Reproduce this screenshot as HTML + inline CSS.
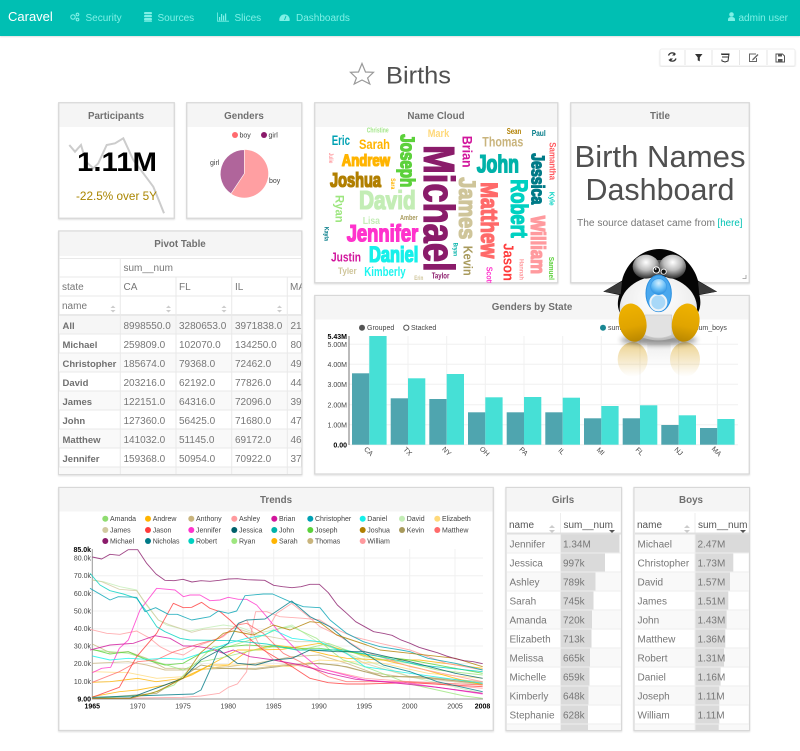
<!DOCTYPE html>
<html><head><meta charset="utf-8"><title>Births</title>
<style>
html,body{margin:0;padding:0;background:#fff;width:800px;height:751px;overflow:hidden}
svg{display:block;font-family:"Liberation Sans",sans-serif;filter:blur(.3px)}
.h{font-size:9.800px;font-weight:bold;fill:#707070;text-anchor:middle}
.p{fill:#fff;stroke:#d8d8d8;stroke-width:1.300}
.hd{fill:#f5f5f5}
.nav{font-size:10px;fill:#7ff0e6}
.c{font-weight:bold}
.t{font-size:10px;fill:#777}
.b{font-size:9.500px;fill:#707070;font-weight:bold}
.l{font-size:7px;fill:#444}
.ax{font-size:7px;fill:#444}
.ln polyline{fill:none;stroke-width:2.800;stroke-linejoin:round;opacity:.8}
</style></head><body>
<svg width="800" height="751" viewBox="0 0 800 751" xmlns="http://www.w3.org/2000/svg">
<defs>
<filter id="sh" x="-5%" y="-5%" width="110%" height="110%"><feDropShadow dx="0" dy="1" stdDeviation=".8" flood-color="#000" flood-opacity=".12"/></filter>
<filter id="bl" x="-30%" y="-100%" width="160%" height="300%"><feGaussianBlur stdDeviation="8"/></filter>
<filter id="fat" x="-2%" y="-2%" width="104%" height="104%"><feMorphology operator="dilate" radius=".28"/></filter>
<clipPath id="cp"><rect x="59" y="258" width="242.500" height="216"/></clipPath>
<clipPath id="cg"><rect x="507" y="513" width="114" height="217"/></clipPath>
<clipPath id="cb"><rect x="635" y="513" width="114" height="217"/></clipPath>
<clipPath id="cw"><rect x="315" y="127" width="243" height="156"/></clipPath>
<linearGradient id="ft" x1="0" y1="0" x2="0" y2="1"><stop offset="0" stop-color="#efb200"/><stop offset=".6" stop-color="#e0a400"/><stop offset="1" stop-color="#b98700"/></linearGradient>
<linearGradient id="rf" x1="0" y1="0" x2="0" y2="1"><stop offset="0" stop-color="#d9a520" stop-opacity=".5"/><stop offset="1" stop-color="#d9a520" stop-opacity="0"/></linearGradient>
<linearGradient id="rfb" x1="0" y1="0" x2="0" y2="1"><stop offset="0" stop-color="#ddd" stop-opacity=".5"/><stop offset="1" stop-color="#ddd" stop-opacity="0"/></linearGradient>
<radialGradient id="bd" cx=".5" cy=".35" r=".7"><stop offset="0" stop-color="#fff"/><stop offset=".65" stop-color="#eee"/><stop offset="1" stop-color="#aaa"/></radialGradient>
<radialGradient id="gl" cx=".5" cy=".32" r=".66"><stop offset="0" stop-color="#fff"/><stop offset=".5" stop-color="#bdbdbd"/><stop offset="1" stop-color="#333"/></radialGradient>
<radialGradient id="bu" cx=".5" cy=".28" r=".72"><stop offset="0" stop-color="#d5f0ff"/><stop offset=".55" stop-color="#6cc0f7"/><stop offset="1" stop-color="#2a8fe0"/></radialGradient>
</defs>

<!-- navbar -->
<rect x="0" y="0" width="800" height="36" fill="#00bfb3" filter="url(#sh)"/>
<text x="8" y="21" font-size="13" fill="#fff">Caravel</text>
<g fill="none" stroke="#7ff0e6" stroke-width="1.100"><circle cx="73" cy="17" r="2.200"/><circle cx="77.500" cy="14.500" r="1.300"/><circle cx="77.500" cy="19.500" r="1.300"/></g>
<text class="nav" x="85.500" y="21">Security</text>
<g fill="#7ff0e6"><rect x="144" y="12" width="8" height="2.200" rx="1"/><rect x="144" y="15" width="8" height="2.200" rx="1"/><rect x="144" y="18" width="8" height="2.200" rx="1"/><rect x="144" y="20.500" width="8" height="1.200" rx=".6"/></g>
<text class="nav" x="157.500" y="21">Sources</text>
<path d="M217.500 12.500V21.200H229" stroke="#7ff0e6" fill="none" stroke-width=".8"/>
<g fill="#7ff0e6"><rect x="219" y="17" width="1.200" height="3.500"/><rect x="221" y="14" width="1.200" height="6.500"/><rect x="223" y="15.500" width="1.200" height="5"/><rect x="225" y="13.500" width="1.200" height="7"/></g>
<text class="nav" x="234.500" y="21">Slices</text>
<path d="M279.500 21a5.200 5.200 0 1 1 10 0z" fill="#7ff0e6"/><path d="M284.500 20l1.500-4" stroke="#00bfb3" stroke-width="1"/>
<text class="nav" x="296" y="21">Dashboards</text>
<circle cx="731.500" cy="14.500" r="2.300" fill="#7ff0e6"/><path d="M728 21v-1.500q0-2.500 3.500-2.500t3.500 2.500V21z" fill="#7ff0e6"/>
<text class="nav" x="738.500" y="21">admin user</text>

<!-- title -->
<polygon points="362,63.500 365.500,72 373.500,72.300 367.600,78 369.800,84 362,80 354.200,84 356.400,78 350.500,72.300 358.500,72" fill="none" stroke="#999" stroke-width="1.200"/>
<text x="386" y="83.500" font-size="24.500" fill="#505050" textLength="65" lengthAdjust="spacingAndGlyphs">Births</text>

<!-- toolbar -->
<rect x="660" y="49" width="135" height="17" rx="2" fill="#fff" stroke="#eee" filter="url(#sh)"/>
<g stroke="#e6e6e6"><path d="M685 50V65M712 50V65M739.500 50V65M767 50V65"/></g>
<path d="M668.500 55.500a4 4 0 0 1 7-1M676 58.500a4 4 0 0 1-7 1" fill="none" stroke="#333" stroke-width="1.300"/>
<path d="M675 52.500v3h-3zM670 61.500v-3h3z" fill="#333"/>
<path d="M695 54h7.500l-2.700 3.400v4l-2.100-1v-3z" fill="#333"/>
<path d="M721 54h8l-1 7-3 1-3-1-.2-1.500M722 57h6M721.500 54.500h7" fill="none" stroke="#333" stroke-width="1"/>
<path d="M756 54h-6.500v7.500h7V58" fill="none" stroke="#666" stroke-width="1"/><path d="M752.500 59l5-5 1 1-5 5-1.500.5z" fill="#666"/>
<path d="M776 54h6.500l2 2v6h-8.500z" fill="none" stroke="#555" stroke-width="1"/><rect x="778" y="54" width="4" height="2.500" fill="#555"/><rect x="778" y="59" width="4.500" height="2.500" fill="#555"/>

<!-- panels -->
<g filter="url(#sh)">
<rect class="p" x="58.750" y="102.750" width="115.500" height="115.500"/>
<rect class="p" x="186.750" y="102.750" width="115" height="115.500"/>
<rect class="p" x="314.750" y="102.750" width="243" height="180"/>
<rect class="p" x="570.750" y="102.750" width="178.500" height="180"/>
<rect class="p" x="58.750" y="231" width="243" height="243.500"/>
<rect class="p" x="314.750" y="295.500" width="434.500" height="178.500"/>
<rect class="p" x="58.750" y="487.500" width="434.500" height="243"/>
<rect class="p" x="506" y="487.500" width="115.500" height="243"/>
<rect class="p" x="634" y="487.500" width="115.500" height="243"/>
</g>
<rect class="hd" x="59.500" y="103.500" width="114" height="23.500"/>
<rect class="hd" x="187.500" y="103.500" width="113.500" height="23.500"/>
<rect class="hd" x="315.500" y="103.500" width="241.500" height="23.500"/>
<rect class="hd" x="571.500" y="103.500" width="177" height="23.500"/>
<rect class="hd" x="59.500" y="232" width="241.500" height="24"/>
<rect class="hd" x="315.500" y="296" width="433" height="23.500"/>
<rect class="hd" x="59.500" y="488" width="433" height="23.500"/>
<rect class="hd" x="507" y="488" width="114" height="23.500"/>
<rect class="hd" x="635" y="488" width="114" height="23.500"/>
<text class="h" x="116" y="119">Participants</text>
<text class="h" x="244" y="119">Genders</text>
<text class="h" x="436" y="119">Name Cloud</text>
<text class="h" x="660" y="119">Title</text>
<text class="h" x="180" y="247">Pivot Table</text>
<text class="h" x="532" y="310">Genders by State</text>
<text class="h" x="276" y="503">Trends</text>
<text class="h" x="563" y="503">Girls</text>
<text class="h" x="691" y="503">Boys</text>

<!-- participants -->
<polyline points="69.300,145 75,151.700 81,145 86,161.700 93.300,168.300 98.300,163.300 106.700,145 115,143.300 123.300,138.300 133.300,160 143.300,173.300 153.300,186.700 160,203.300 164,213.300" fill="none" stroke="#ccc" stroke-width="2"/>
<text x="77" y="171" font-size="27" font-weight="bold" fill="#000" textLength="80" lengthAdjust="spacingAndGlyphs">1.11M</text>
<text x="76" y="200" font-size="11.500" fill="#a98500" textLength="81" lengthAdjust="spacingAndGlyphs">-22.5% over 5Y</text>

<!-- genders -->
<circle cx="235" cy="135" r="3" fill="#ff5a5f" opacity=".9"/><text class="l" x="239.500" y="137.500">boy</text>
<circle cx="264" cy="135" r="3" fill="#8a1a6a"/><text class="l" x="268.500" y="137.500">girl</text>
<circle cx="244.300" cy="173.700" r="24" fill="#ff9fa2"/>
<path d="M244.300 173.700V149.700A24 24 0 0 0 231 193.700z" fill="#b0659b" stroke="#fff" stroke-width=".6"/>
<text class="l" x="210" y="165">girl</text><text class="l" x="269" y="183">boy</text>

<!-- word cloud -->
<g clip-path="url(#cw)">
<g class="c">
<text x="366.700" y="132.500" font-size="7" fill="#a4e68a" textLength="22" lengthAdjust="spacingAndGlyphs">Christine</text>
<text x="331.700" y="145" font-size="13.500" fill="#00a1b3" textLength="18.300" lengthAdjust="spacingAndGlyphs">Eric</text>
<text x="359" y="149" font-size="14" fill="#ffb400" textLength="31" lengthAdjust="spacingAndGlyphs">Sarah</text>
<text x="427.700" y="137" font-size="11" fill="#ffd97a" textLength="21.600" lengthAdjust="spacingAndGlyphs">Mark</text>
<text x="506.700" y="134" font-size="8" fill="#b17f00" textLength="14.600" lengthAdjust="spacingAndGlyphs">Sean</text>
<text x="531.700" y="136" font-size="8" fill="#007a87" textLength="14" lengthAdjust="spacingAndGlyphs">Paul</text>
<text x="482.300" y="146.500" font-size="14" fill="#c9b47c" textLength="41" lengthAdjust="spacingAndGlyphs">Thomas</text>
<text x="362.700" y="224" font-size="10" fill="#c3edb5" textLength="17.300" lengthAdjust="spacingAndGlyphs">Lisa</text>
<text x="400" y="220" font-size="7" fill="#a89a5c" textLength="17.700" lengthAdjust="spacingAndGlyphs">Amber</text>
<text x="331" y="261.500" font-size="13" fill="#d1159c" textLength="30" lengthAdjust="spacingAndGlyphs">Justin</text>
<text x="338" y="274" font-size="9.500" fill="#cfc59a" textLength="18.700" lengthAdjust="spacingAndGlyphs">Tyler</text>
<text x="364.300" y="276" font-size="13" fill="#1ff5ef" textLength="41.400" lengthAdjust="spacingAndGlyphs">Kimberly</text>
<text x="431.700" y="278.500" font-size="8" fill="#8a1a6a" textLength="17.600" lengthAdjust="spacingAndGlyphs">Taylor</text>
<text x="414.300" y="280" font-size="6" fill="#cfc59a" textLength="9" lengthAdjust="spacingAndGlyphs">Erin</text>
<text transform="translate(462.700,135.700) rotate(90)" font-size="14" fill="#d1159c" textLength="32" lengthAdjust="spacingAndGlyphs">Brian</text>
<text transform="translate(549.300,142.300) rotate(90)" font-size="9" fill="#ff5a5f" textLength="37.700" lengthAdjust="spacingAndGlyphs">Samantha</text>
<text transform="translate(549.300,191.700) rotate(90)" font-size="7.500" fill="#00d1c1" textLength="14" lengthAdjust="spacingAndGlyphs">Kyle</text>
<text transform="translate(503.300,243.300) rotate(90)" font-size="15" fill="#ff3b3b" textLength="37.700" lengthAdjust="spacingAndGlyphs">Jason</text>
<text transform="translate(519.300,259) rotate(90)" font-size="6" fill="#ff9a9e" textLength="21" lengthAdjust="spacingAndGlyphs">Hannah</text>
<text transform="translate(549,256.700) rotate(90)" font-size="7" fill="#5bd13a" textLength="23.300" lengthAdjust="spacingAndGlyphs">Samuel</text>
<text transform="translate(486.700,266.700) rotate(90)" font-size="8" fill="#ff33cc" textLength="17.700" lengthAdjust="spacingAndGlyphs">Scott</text>
<text transform="translate(463.300,245.700) rotate(90)" font-size="13" fill="#a89a5c" textLength="30" lengthAdjust="spacingAndGlyphs">Kevin</text>
<text transform="translate(453.300,242.700) rotate(90)" font-size="6" fill="#00b2a9" textLength="13.300" lengthAdjust="spacingAndGlyphs">Bryan</text>
<text transform="translate(335.700,195) rotate(90)" font-size="12" fill="#9de67f" textLength="27.700" lengthAdjust="spacingAndGlyphs">Ryan</text>
<text transform="translate(391,178.300) rotate(90)" font-size="6" fill="#ffb400" textLength="11" lengthAdjust="spacingAndGlyphs">Sara</text>
<text transform="translate(329,152.700) rotate(90)" font-size="6" fill="#ff9a9e" textLength="10.600" lengthAdjust="spacingAndGlyphs">Julie</text>
<text transform="translate(324.300,226.700) rotate(90)" font-size="6" fill="#007a87" textLength="14.300" lengthAdjust="spacingAndGlyphs">Kayla</text>
</g>
<g class="c" filter="url(#fat)">
<text x="476.700" y="172.500" font-size="25" fill="#00b2a9" textLength="42.300" lengthAdjust="spacingAndGlyphs">John</text>
<text x="341.700" y="166" font-size="17" fill="#ffb400" textLength="48.300" lengthAdjust="spacingAndGlyphs">Andrew</text>
<text x="330" y="187" font-size="20" fill="#b17f00" textLength="51" lengthAdjust="spacingAndGlyphs">Joshua</text>
<text x="359" y="209" font-size="26" fill="#c3edb5" textLength="56.700" lengthAdjust="spacingAndGlyphs">David</text>
<text x="346.700" y="241.500" font-size="24" fill="#ff33cc" textLength="71.600" lengthAdjust="spacingAndGlyphs">Jennifer</text>
<text x="369" y="262" font-size="22" fill="#14f0ea" textLength="49.300" lengthAdjust="spacingAndGlyphs">Daniel</text>
<text transform="translate(424,145) rotate(90)" font-size="44" fill="#8a1a6a" textLength="126.700" lengthAdjust="spacingAndGlyphs">Michael</text>
<text transform="translate(400.700,134.300) rotate(90)" font-size="20" fill="#5bd13a" textLength="53" lengthAdjust="spacingAndGlyphs">Joseph</text>
<text transform="translate(459,177.300) rotate(90)" font-size="24" fill="#cfc59a" textLength="62" lengthAdjust="spacingAndGlyphs">James</text>
<text transform="translate(481,182.300) rotate(90)" font-size="24" fill="#ff6b6b" textLength="76" lengthAdjust="spacingAndGlyphs">Matthew</text>
<text transform="translate(511,179.300) rotate(90)" font-size="24" fill="#00d1c1" textLength="58.400" lengthAdjust="spacingAndGlyphs">Robert</text>
<text transform="translate(531.700,153.300) rotate(90)" font-size="18" fill="#007a87" textLength="51" lengthAdjust="spacingAndGlyphs">Jessica</text>
<text transform="translate(531,215.700) rotate(90)" font-size="20" fill="#ff9a9e" textLength="58.300" lengthAdjust="spacingAndGlyphs">William</text>
</g>
</g>

<!-- title panel -->
<text x="660" y="167" font-size="31" fill="#505050" text-anchor="middle" textLength="171" lengthAdjust="spacingAndGlyphs">Birth Names</text>
<text x="660" y="200" font-size="31" fill="#505050" text-anchor="middle" textLength="149" lengthAdjust="spacingAndGlyphs">Dashboard</text>
<text x="577" y="226" font-size="10" fill="#777" textLength="138" lengthAdjust="spacingAndGlyphs">The source dataset came from</text>
<text x="717.500" y="226" font-size="10" fill="#00c2b3" textLength="25" lengthAdjust="spacingAndGlyphs">[here]</text>
<path d="M746 275v3.500h-3.500" fill="none" stroke="#999" stroke-width=".8"/>

<!-- pivot table -->
<g clip-path="url(#cp)">
<rect x="59" y="315" width="243" height="19" fill="#f6f6f6"/>
<rect x="59" y="353" width="243" height="19" fill="#f9f9f9"/><rect x="59" y="391" width="243" height="19" fill="#f9f9f9"/><rect x="59" y="429" width="243" height="19" fill="#f9f9f9"/><rect x="59" y="467" width="243" height="8" fill="#f9f9f9"/>
<g stroke="#e9e9e9" fill="none">
<path d="M120.300 258V475M176 277V475M231.700 277V475M287.300 277V475"/>
<path d="M59 258.500H302M59 277H302M59 296H302M59 334H302M59 353H302M59 372H302M59 391H302M59 410H302M59 429H302M59 448H302M59 467H302"/>
<path d="M59 315H302" stroke-width="2"/>
</g>
<g fill="#ccc"><path d="M110.500 308l2.500-2.500 2.500 2.500zM110.500 310l2.500 2.500 2.500-2.500zM166 308l2.500-2.500 2.500 2.500zM166 310l2.500 2.500 2.500-2.500zM221.500 308l2.500-2.500 2.500 2.500zM221.500 310l2.500 2.500 2.500-2.500zM277 308l2.500-2.500 2.500 2.500zM277 310l2.500 2.500 2.500-2.500z"/></g>
<text class="t" x="123.500" y="271" fill="#666">sum__num</text>
<text class="t" x="62" y="290">state</text><text class="t" x="123.500" y="290">CA</text><text class="t" x="179" y="290">FL</text><text class="t" x="235" y="290">IL</text><text class="t" x="290" y="290">MA</text>
<text class="t" x="62" y="309">name</text>
<text class="b" x="62.500" y="329">All</text><text class="t" x="123.500" y="329">8998550.0</text><text class="t" x="179" y="329">3280653.0</text><text class="t" x="235" y="329">3971838.0</text><text class="t" x="290.500" y="329">21</text>
<text class="b" x="62.500" y="348">Michael</text><text class="t" x="123.500" y="348">259809.0</text><text class="t" x="179" y="348">102070.0</text><text class="t" x="235" y="348">134250.0</text><text class="t" x="290.500" y="348">80</text>
<text class="b" x="62.500" y="367">Christopher</text><text class="t" x="123.500" y="367">185674.0</text><text class="t" x="179" y="367">79368.0</text><text class="t" x="235" y="367">72462.0</text><text class="t" x="290.500" y="367">49</text>
<text class="b" x="62.500" y="386">David</text><text class="t" x="123.500" y="386">203216.0</text><text class="t" x="179" y="386">62192.0</text><text class="t" x="235" y="386">77826.0</text><text class="t" x="290.500" y="386">44</text>
<text class="b" x="62.500" y="405">James</text><text class="t" x="123.500" y="405">122151.0</text><text class="t" x="179" y="405">64316.0</text><text class="t" x="235" y="405">72096.0</text><text class="t" x="290.500" y="405">39</text>
<text class="b" x="62.500" y="424">John</text><text class="t" x="123.500" y="424">127360.0</text><text class="t" x="179" y="424">56425.0</text><text class="t" x="235" y="424">71680.0</text><text class="t" x="290.500" y="424">47</text>
<text class="b" x="62.500" y="443">Matthew</text><text class="t" x="123.500" y="443">141032.0</text><text class="t" x="179" y="443">51145.0</text><text class="t" x="235" y="443">69172.0</text><text class="t" x="290.500" y="443">46</text>
<text class="b" x="62.500" y="462">Jennifer</text><text class="t" x="123.500" y="462">159368.0</text><text class="t" x="179" y="462">50954.0</text><text class="t" x="235" y="462">70922.0</text><text class="t" x="290.500" y="462">37</text>
<text class="b" x="62.500" y="481">Robert</text><text class="t" x="123.500" y="481">100310.0</text><text class="t" x="179" y="481">54100.0</text><text class="t" x="235" y="481">45105.0</text><text class="t" x="290.500" y="481">34</text>
</g>

<!-- bars -->
<g stroke="#f0f0f0" fill="none">
<path d="M369.300 336V445M408 336V445M446.700 336V445M485.300 336V445M524 336V445M562.700 336V445M601.300 336V445M640 336V445M678.700 336V445M717.300 336V445"/>
<path d="M349 344.300H738M349 364.300H738M349 384.300H738M349 404.700H738M349 424.700H738M349 444.700H738"/>
</g>
<path d="M349 336V445" stroke="#777" stroke-width="1" fill="none"/>
<g fill="#4fa5af">
<rect x="352" y="373.300" width="17.300" height="71.400"/><rect x="390.700" y="398.300" width="17.300" height="46.400"/><rect x="429.300" y="399" width="17.300" height="45.700"/><rect x="468" y="412.300" width="17.300" height="32.400"/><rect x="506.700" y="412.300" width="17.300" height="32.400"/><rect x="545.300" y="412.300" width="17.300" height="32.400"/><rect x="584" y="418.300" width="17.300" height="26.400"/><rect x="622.700" y="418.300" width="17.300" height="26.400"/><rect x="661.300" y="425" width="17.300" height="19.700"/><rect x="700" y="428" width="17.300" height="16.700"/>
</g>
<g fill="#46e0d6">
<rect x="369.300" y="336" width="17.300" height="108.700"/><rect x="408" y="378.300" width="17.300" height="66.400"/><rect x="446.700" y="374" width="17.300" height="70.700"/><rect x="485.300" y="397.300" width="17.300" height="47.400"/><rect x="524" y="397" width="17.300" height="47.700"/><rect x="562.700" y="397.700" width="17.300" height="47"/><rect x="601.300" y="406" width="17.300" height="38.700"/><rect x="640" y="405.300" width="17.300" height="39.400"/><rect x="678.700" y="415.300" width="17.300" height="29.400"/><rect x="717.300" y="419" width="17.300" height="25.700"/>
</g>
<circle cx="362" cy="327.700" r="3" fill="#555"/><text class="l" x="367" y="330">Grouped</text>
<circle cx="406.300" cy="327.700" r="2.600" fill="#fff" stroke="#555"/><text class="l" x="411" y="330">Stacked</text>
<circle cx="603" cy="327.700" r="3" fill="#007a87" opacity=".9"/><text class="l" x="608" y="330">sum_girls</text>
<circle cx="690" cy="327.700" r="3" fill="#00d1c1"/><text class="l" x="695" y="330">sum_boys</text>
<g class="ax" text-anchor="end">
<text x="347" y="339" font-weight="bold" fill="#000">5.43M</text><text x="347" y="347">5.00M</text><text x="347" y="367">4.00M</text><text x="347" y="387">3.00M</text><text x="347" y="407.500">2.00M</text><text x="347" y="427.500">1.00M</text><text x="347" y="447.500" font-weight="bold" fill="#000">0.00</text>
</g>
<g class="ax" text-anchor="middle">
<text transform="translate(367,453) rotate(45)">CA</text><text transform="translate(406,453) rotate(45)">TX</text><text transform="translate(445,453) rotate(45)">NY</text><text transform="translate(483,453) rotate(45)">OH</text><text transform="translate(522,453) rotate(45)">PA</text><text transform="translate(560,453) rotate(45)">IL</text><text transform="translate(599,453) rotate(45)">MI</text><text transform="translate(638,453) rotate(45)">FL</text><text transform="translate(677,453) rotate(45)">NJ</text><text transform="translate(715,453) rotate(45)">MA</text>
</g>

<!-- trends legend -->
<g>
<circle cx="105.300" cy="518.700" r="3" fill="#8fdc70"/><text class="l" x="110" y="521">Amanda</text>
<circle cx="148" cy="518.700" r="3" fill="#ffb400"/><text class="l" x="152.700" y="521">Andrew</text>
<circle cx="191.300" cy="518.700" r="3" fill="#c9b47c"/><text class="l" x="196" y="521">Anthony</text>
<circle cx="234.300" cy="518.700" r="3" fill="#ff9a9e"/><text class="l" x="239" y="521">Ashley</text>
<circle cx="274.300" cy="518.700" r="3" fill="#d1159c"/><text class="l" x="279" y="521">Brian</text>
<circle cx="310.300" cy="518.700" r="3" fill="#00a1b3"/><text class="l" x="315" y="521">Christopher</text>
<circle cx="362.700" cy="518.700" r="3" fill="#14f0ea"/><text class="l" x="367.300" y="521">Daniel</text>
<circle cx="402" cy="518.700" r="3" fill="#c3edb5"/><text class="l" x="406.700" y="521">David</text>
<circle cx="437.300" cy="518.700" r="3" fill="#ffd97a"/><text class="l" x="442" y="521">Elizabeth</text>
<circle cx="105.300" cy="530" r="3" fill="#d1c9a0"/><text class="l" x="110" y="532.300">James</text>
<circle cx="148" cy="530" r="3" fill="#ff3b3b"/><text class="l" x="152.700" y="532.300">Jason</text>
<circle cx="191.300" cy="530" r="3" fill="#ff33cc"/><text class="l" x="196" y="532.300">Jennifer</text>
<circle cx="234.300" cy="530" r="3" fill="#00606a"/><text class="l" x="239" y="532.300">Jessica</text>
<circle cx="274.300" cy="530" r="3" fill="#00b2a9"/><text class="l" x="279" y="532.300">John</text>
<circle cx="310.300" cy="530" r="3" fill="#5bd13a"/><text class="l" x="315" y="532.300">Joseph</text>
<circle cx="362.700" cy="530" r="3" fill="#b17f00"/><text class="l" x="367.300" y="532.300">Joshua</text>
<circle cx="402" cy="530" r="3" fill="#a89a5c"/><text class="l" x="406.700" y="532.300">Kevin</text>
<circle cx="437.300" cy="530" r="3" fill="#ff6b6b"/><text class="l" x="442" y="532.300">Matthew</text>
<circle cx="105.300" cy="541" r="3" fill="#8a1a6a"/><text class="l" x="110" y="543.300">Michael</text>
<circle cx="148" cy="541" r="3" fill="#007a87"/><text class="l" x="152.700" y="543.300">Nicholas</text>
<circle cx="191.300" cy="541" r="3" fill="#00d1c1"/><text class="l" x="196" y="543.300">Robert</text>
<circle cx="234.300" cy="541" r="3" fill="#9de67f"/><text class="l" x="239" y="543.300">Ryan</text>
<circle cx="274.300" cy="541" r="3" fill="#ffb400"/><text class="l" x="279" y="543.300">Sarah</text>
<circle cx="310.300" cy="541" r="3" fill="#c9b47c"/><text class="l" x="315" y="543.300">Thomas</text>
<circle cx="362.700" cy="541" r="3" fill="#ff9a9e"/><text class="l" x="367.300" y="543.300">William</text>
</g>
<!-- trends grid -->
<g stroke="#f0f0f0" fill="none">
<path d="M137.700 549V699M183 549V699M228.300 549V699M273.700 549V699M319 549V699M364.300 549V699M409.700 549V699M455 549V699"/>
<path d="M92 558H483M92 575.700H483M92 593.300H483M92 611H483M92 628.700H483M92 646H483M92 663.500H483M92 681.500H483"/>
</g>
<path d="M92.300 549V699H483" stroke="#999" fill="none"/>
<g class="ln" transform="translate(50,610) scale(.33333)">
<polyline stroke="#c3edb5" points="127,-90 160,-85 210,-70 260,-60 285,-20 325,30 350,45 420,63 460,55 520,45 570,52 620,70 671,60 726,45 808,100 944,150 1080,200 1298,250"/>
<polyline stroke="#d1c9a0" points="127,-90 155,-85 208,-62 260,-58 280,-30 325,30 360,45 425,67 460,58 560,55 620,75 660,80 740,95 820,95 944,160 1080,200 1298,225"/>
<polyline stroke="#c9b47c" points="127,160 235,155 290,165 345,180 399,180 453,178 535,175 617,175 698,165 780,160 862,165 944,185 1053,200 1298,218"/>
<polyline stroke="#c9b47c" points="127,102 180,128 235,125 290,145 345,175 399,175 453,178 535,170 617,160 726,140 808,135 890,160 999,200 1108,200 1298,215"/>
<polyline stroke="#a89a5c" points="127,265 320,250 399,200 453,165 508,175 617,178 726,165 808,160 890,170 999,200 1108,200 1298,222"/>
<polyline stroke="#ffd97a" points="127,185 235,188 320,205 399,200 453,180 535,165 644,165 726,170 808,150 999,160 1134,190 1298,205"/>
<polyline stroke="#ffb400" points="127,260 208,245 263,240 345,225 426,195 480,165 535,165 590,125 671,105 753,115 835,135 890,145 1000,150 1108,175 1216,205 1298,225"/>
<polyline stroke="#ffb400" points="127,217 180,215 263,205 318,215 399,205 480,165 562,120 617,120 698,118 808,100 880,120 999,150 1108,150 1298,175"/>
<polyline stroke="#9de67f" points="127,265 290,255 372,225 426,170 490,110 535,110 617,85 690,55 725,50 800,85 840,120 880,150 944,170 1080,222 1243,258 1298,265"/>
<polyline stroke="#9de67f" points="127,120 235,130 318,155 399,180 453,155 508,145 590,125 671,110 753,120 835,100 944,140 1080,160 1162,180 1298,195"/>
<polyline stroke="#5bd13a" points="127,118 180,132 235,125 290,150 345,165 399,160 453,130 535,110 590,105 671,110 753,115 808,115 890,125 999,140 1080,150 1216,175 1298,190"/>
<polyline stroke="#ff9a9e" points="120,58 170,70 210,73 260,63 300,85 330,110 360,125 400,135 450,105 520,80 560,45 590,30 625,100 671,150 760,170 830,180 944,205 1080,215 1298,235"/>
<polyline stroke="#ff9a9e" points="127,266 399,262 453,258 508,250 535,232 562,222 590,185 605,60 617,5 650,5 690,20 760,25 810,30 840,50 910,80 990,100 1080,120 1189,160 1298,180"/>
<polyline stroke="#ff9a9e" points="660,45 680,10 725,-20 770,15 810,50 862,75 944,125 1080,170 1298,215"/>
<polyline stroke="#ff6b6b" points="127,217 208,185 263,155 318,150 372,125 453,100 508,85 562,45 590,40 640,70 700,130 760,160 835,200 890,215 1000,215 1080,215 1298,225"/>
<polyline stroke="#ff3b3b" points="127,262 208,232 260,140 320,70 370,-20 400,-7 425,-8 455,-23 480,-5 510,5 540,30 590,80 640,120 690,150 726,170 780,205 835,218 890,222 944,222 1080,218 1298,230"/>
<polyline stroke="#ff33cc" points="127,188 155,175 182,172 208,115 235,90 270,0 320,-65 375,-60 400,-40 420,-45 450,-45 480,-28 510,-30 535,-38 565,-32 590,-32 620,-15 650,20 690,70 740,120 808,175 944,210 1080,220 1298,252"/>
<polyline stroke="#d1159c" points="120,120 180,105 250,100 315,77 360,85 400,108 430,108 480,115 520,130 550,120 600,140 671,150 753,165 835,190 917,208 1026,218 1162,232 1298,250"/>
<polyline stroke="#14f0ea" points="127,138 180,150 235,145 290,148 345,145 399,148 453,130 535,100 590,85 644,75 671,60 726,85 808,95 890,130 944,170 1080,190 1298,220"/>
<polyline stroke="#00d1c1" points="120,-110 150,-75 180,-58 220,-48 260,-35 290,5 320,50 345,65 390,85 420,90 550,92 650,102 740,120 880,120 990,140 1108,165 1298,185"/>
<polyline stroke="#00a1b3" points="120,-65 180,-30 205,-40 260,-38 285,5 317,-7 355,13 382,13 425,30 480,20 505,3 535,10 560,3 585,-43 640,-48 668,-48 720,-25 760,-10 810,-7 840,30 890,70 940,95 990,110 1053,120 1080,125 1134,145 1216,160 1298,180"/>
<polyline stroke="#00606a" points="127,265 240,264 290,245 345,225 399,205 453,150 508,120 562,160 617,165 671,150 726,145 780,120 862,125 944,125 1080,155 1216,190 1298,205"/>
<polyline stroke="#007a87" points="127,262 430,252 453,240 480,180 505,120 535,100 565,40 590,30 645,27 670,10 725,-27 780,20 840,50 900,100 960,140 1000,165 1080,185 1162,215 1298,245"/>
<polyline stroke="#b17f00" points="127,265 240,265 320,245 399,205 450,130 520,70 550,63 610,75 640,60 670,45 720,60 780,35 810,38 860,75 950,105 990,120 1080,130 1216,145 1298,170"/>
<polyline stroke="#8a1a6a" points="127,-159 155,-153 180,-167 208,-164 235,-181 263,-181 290,-140 318,-108 345,-89 372,-88 399,-92 426,-84 453,-88 480,-86 508,-89 535,-93 562,-94 590,-91 617,-90 644,-89 671,-74 698,-70 726,-67 753,-70 780,-77 808,-77 835,-52 862,-15 890,10 917,35 944,50 971,65 999,70 1026,76 1053,90 1080,100 1107,112 1134,120 1162,128 1189,138 1216,146 1243,152 1270,155 1298,161"/>
</g>
<g class="ax" text-anchor="end">
<text x="91" y="552" font-weight="bold" fill="#000">85.0k</text><text x="91" y="560.500">80.0k</text><text x="91" y="578">70.0k</text><text x="91" y="596">60.0k</text><text x="91" y="613.500">50.0k</text><text x="91" y="631">40.0k</text><text x="91" y="648.500">30.0k</text><text x="91" y="666">20.0k</text><text x="91" y="684">10.0k</text><text x="91" y="701.500" font-weight="bold" fill="#000">9.00</text>
</g>
<g class="ax" text-anchor="middle">
<text x="92.300" y="708.500" font-weight="bold" fill="#000">1965</text><text x="137.700" y="708.500">1970</text><text x="183" y="708.500">1975</text><text x="228.300" y="708.500">1980</text><text x="273.700" y="708.500">1985</text><text x="319" y="708.500">1990</text><text x="364.300" y="708.500">1995</text><text x="409.700" y="708.500">2000</text><text x="455" y="708.500">2005</text><text x="482.500" y="708.500" font-weight="bold" fill="#000">2008</text>
</g>

<!-- girls -->
<g clip-path="url(#cg)">
<g fill="#f9f9f9"><rect x="507" y="534" width="54" height="19"/><rect x="507" y="572" width="114" height="19"/><rect x="507" y="610" width="114" height="19"/><rect x="507" y="648" width="114" height="19"/><rect x="507" y="686" width="114" height="19"/><rect x="507" y="724" width="114" height="7"/></g>
<g fill="#dadada"><rect x="560.500" y="534" width="59" height="19"/><rect x="560.500" y="553" width="44.500" height="19"/><rect x="560.500" y="572" width="35" height="19"/><rect x="560.500" y="591" width="33" height="19"/><rect x="560.500" y="610" width="31.500" height="19"/><rect x="560.500" y="629" width="31" height="19"/><rect x="560.500" y="648" width="29.500" height="19"/><rect x="560.500" y="667" width="29" height="19"/><rect x="560.500" y="686" width="28" height="19"/><rect x="560.500" y="705" width="27.500" height="19"/><rect x="560.500" y="724" width="27.500" height="7"/></g>
<path d="M507 553H622M507 572H622M507 591H622M507 610H622M507 629H622M507 648H622M507 667H622M507 686H622M507 705H622M507 724H622M560.500 513V731" stroke="#eee" fill="none"/>
<path d="M507 533.500H622" stroke="#e0e0e0" stroke-width="2"/>
<text class="t" x="509" y="528" style="fill:#555">name</text><text class="t" x="563.500" y="528" style="fill:#555">sum__num</text>
<path d="M549 528l3-3 3 3zM549 530l3 3 3-3z" fill="#ccc"/><path d="M609 530h6l-3 3z" fill="#555"/>
<g class="t"><text x="509.500" y="547.500">Jennifer</text><text x="509.500" y="566.500">Jessica</text><text x="509.500" y="585.500">Ashley</text><text x="509.500" y="604.500">Sarah</text><text x="509.500" y="623.500">Amanda</text><text x="509.500" y="642.500">Elizabeth</text><text x="509.500" y="661.500">Melissa</text><text x="509.500" y="680.500">Michelle</text><text x="509.500" y="699.500">Kimberly</text><text x="509.500" y="718.500">Stephanie</text><text x="509.500" y="737.500">Emily</text>
<text x="563" y="547.500">1.34M</text><text x="563" y="566.500">997k</text><text x="563" y="585.500">789k</text><text x="563" y="604.500">745k</text><text x="563" y="623.500">720k</text><text x="563" y="642.500">713k</text><text x="563" y="661.500">665k</text><text x="563" y="680.500">659k</text><text x="563" y="699.500">648k</text><text x="563" y="718.500">628k</text><text x="563" y="737.500">615k</text></g>
</g>
<!-- boys -->
<g clip-path="url(#cb)">
<g fill="#f9f9f9"><rect x="635" y="534" width="60" height="19"/><rect x="635" y="572" width="114" height="19"/><rect x="635" y="610" width="114" height="19"/><rect x="635" y="648" width="114" height="19"/><rect x="635" y="686" width="114" height="19"/><rect x="635" y="724" width="114" height="7"/></g>
<g fill="#dadada"><rect x="695.300" y="534" width="54" height="19"/><rect x="695.300" y="553" width="38" height="19"/><rect x="695.300" y="572" width="34.700" height="19"/><rect x="695.300" y="591" width="33" height="19"/><rect x="695.300" y="610" width="31.300" height="19"/><rect x="695.300" y="629" width="30" height="19"/><rect x="695.300" y="648" width="28.700" height="19"/><rect x="695.300" y="667" width="25.300" height="19"/><rect x="695.300" y="686" width="24" height="19"/><rect x="695.300" y="705" width="24" height="19"/><rect x="695.300" y="724" width="23.400" height="7"/></g>
<path d="M635 553H750M635 572H750M635 591H750M635 610H750M635 629H750M635 648H750M635 667H750M635 686H750M635 705H750M635 724H750M695 513V731" stroke="#eee" fill="none"/>
<path d="M635 533.500H750" stroke="#e0e0e0" stroke-width="2"/>
<text class="t" x="637" y="528" style="fill:#555">name</text><text class="t" x="698" y="528" style="fill:#555">sum__num</text>
<path d="M684 528l3-3 3 3zM684 530l3 3 3-3z" fill="#ccc"/><path d="M740 530h6l-3 3z" fill="#555"/>
<g class="t"><text x="637.500" y="547.500">Michael</text><text x="637.500" y="566.500">Christopher</text><text x="637.500" y="585.500">David</text><text x="637.500" y="604.500">James</text><text x="637.500" y="623.500">John</text><text x="637.500" y="642.500">Matthew</text><text x="637.500" y="661.500">Robert</text><text x="637.500" y="680.500">Daniel</text><text x="637.500" y="699.500">Joseph</text><text x="637.500" y="718.500">William</text><text x="637.500" y="737.500">Joshua</text>
<text x="697.500" y="547.500">2.47M</text><text x="697.500" y="566.500">1.73M</text><text x="697.500" y="585.500">1.57M</text><text x="697.500" y="604.500">1.51M</text><text x="697.500" y="623.500">1.43M</text><text x="697.500" y="642.500">1.36M</text><text x="697.500" y="661.500">1.31M</text><text x="697.500" y="680.500">1.16M</text><text x="697.500" y="699.500">1.11M</text><text x="697.500" y="718.500">1.11M</text><text x="697.500" y="737.500">1.07M</text></g>
</g>

<!-- penguin -->
<g transform="translate(560,240) scale(.33333)">
<ellipse cx="218" cy="358" rx="45" ry="52" fill="url(#rf)"/>
<ellipse cx="375" cy="358" rx="45" ry="52" fill="url(#rf)"/>
<rect x="262" y="310" width="70" height="75" fill="url(#rfb)"/>
<ellipse cx="296" cy="300" rx="115" ry="14" fill="#000" opacity=".45" filter="url(#bl)"/>
<path d="M130 155L186 122C196 75 240 27 298 27C356 27 402 75 414 122L471 155L418 165C425 190 420 215 405 230H190C172 215 170 190 178 165Z" fill="#050505"/>
<path d="M130 155L186 124L182 163Z" fill="#3a3a3a"/>
<path d="M471 155L414 124L418 163Z" fill="#3a3a3a"/>
<ellipse cx="295" cy="205" rx="116" ry="96" fill="url(#bd)"/>
<path d="M262 60h70v45h-70z" fill="#555"/>
<ellipse cx="258" cy="80" rx="40" ry="36" fill="url(#gl)"/>
<ellipse cx="338" cy="80" rx="40" ry="36" fill="url(#gl)"/>
<path d="M255 225h80v60q-40 18-80 0z" fill="#e2e2e2" stroke="#ccc" stroke-width="2"/>
<circle cx="289" cy="90" r="11" fill="#fff"/><circle cx="289" cy="90" r="8" fill="#111"/><circle cx="287" cy="87" r="2.500" fill="#fff"/>
<circle cx="311" cy="95" r="9" fill="#fff"/><circle cx="311" cy="95" r="6.500" fill="#111"/>
<ellipse cx="296" cy="160" rx="38" ry="55" fill="#4aa8ee" stroke="#2a8fe0" stroke-width="3"/>
<circle cx="295" cy="187" r="24" fill="#a8d8f8" stroke="#eef4f8" stroke-width="6"/>
<circle cx="296" cy="140" r="24" fill="url(#bu)" stroke="#3a9ae8" stroke-width="2"/>
<ellipse cx="218" cy="248" rx="41" ry="58" fill="url(#ft)" transform="rotate(-12 218 248)"/>
<ellipse cx="377" cy="248" rx="41" ry="58" fill="url(#ft)" transform="rotate(12 377 248)"/>
</g>
</svg>
</body></html>
